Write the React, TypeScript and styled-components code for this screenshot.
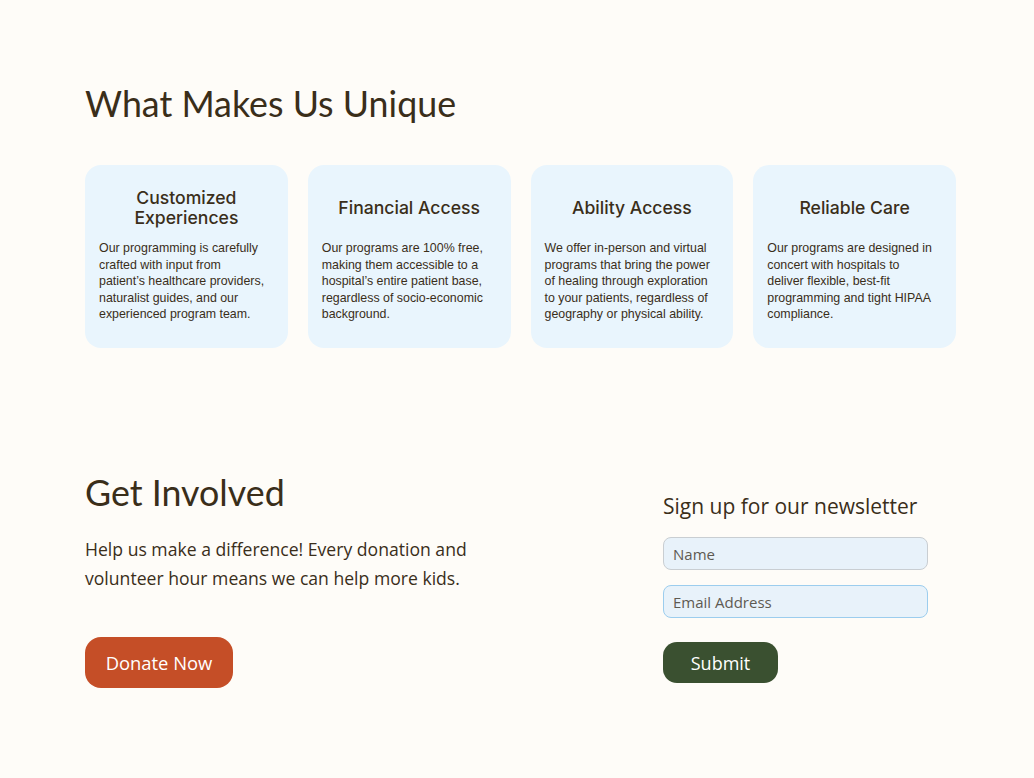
import React from "react";
import styled, { createGlobalStyle } from "styled-components";

const GlobalStyle = createGlobalStyle`
  html, body {
    margin: 0;
    padding: 0;
    background: #fefcf8;
  }
  body {
    font-family: "Liberation Sans", Arial, sans-serif;
    color: #3a2e1a;
  }
  * { box-sizing: border-box; }
`;

const Page = styled.main`
  width: 1034px;
  min-height: 778px;
  padding: 82px 78px 0 85px;
`;

const Heading = styled.h2`
  margin: 0;
  font-family: Lato, "Open Sans", sans-serif;
  font-weight: 400;
  font-size: 35.8px;
  line-height: 44px;
  color: #3a2e1a;
`;

const Cards = styled.div`
  display: grid;
  grid-template-columns: repeat(4, 1fr);
  gap: 20px;
  margin-top: 39px;
`;

const Card = styled.article`
  background: #e9f5fd;
  border-radius: 16px;
  height: 183px;
  padding: 23px 14px 0 14px;
  display: flex;
  flex-direction: column;
`;

const CardTitle = styled.h3`
  margin: 0;
  min-height: 40px;
  padding-bottom: 5px;
  box-sizing: content-box;
  display: flex;
  align-items: center;
  justify-content: center;
  text-align: center;
  font-family: Inter, "Liberation Sans", Arial, sans-serif;
  font-weight: 500;
  font-size: 17.6px;
  line-height: 20px;
  color: #3a2e1a;
`;

const CardText = styled.p`
  margin: 7px 0 0 0;
  padding-right: 6px;
  font-size: 12.4px;
  line-height: 16.5px;
  color: #3a2e1a;
`;

const Involved = styled.section`
  display: grid;
  grid-template-columns: 578px 265px;
  margin-top: 123px;
`;

const LeftCol = styled.div`
  display: flex;
  flex-direction: column;
  align-items: flex-start;
`;

const Lead = styled.p`
  margin: 20px 0 0 0;
  font-family: "Open Sans", Lato, sans-serif;
  font-size: 17.6px;
  line-height: 29px;
  color: #3a2e1a;
  max-width: 400px;
`;

const Button = styled.button<{ $tone: "orange" | "green" }>`
  border: none;
  color: #ffffff;
  cursor: pointer;
  padding: 0;
  font-family: "Open Sans", Lato, sans-serif;
  font-weight: 400;
  font-size: 18.4px;
  background: ${(p) => (p.$tone === "orange" ? "#c54e27" : "#3a5030")};
  width: ${(p) => (p.$tone === "orange" ? "148px" : "115px")};
  height: ${(p) => (p.$tone === "orange" ? "51px" : "41px")};
  border-radius: ${(p) => (p.$tone === "orange" ? "16px" : "14px")};
`;

const DonateButton = styled(Button)`
  margin-top: 44px;
`;

const Form = styled.form`
  display: flex;
  flex-direction: column;
  align-items: flex-start;
  padding-top: 23px;
`;

const FormTitle = styled.h3`
  margin: 0 0 19px 0;
  font-family: "Open Sans", Arial, sans-serif;
  font-weight: 400;
  font-size: 21px;
  line-height: 24px;
  color: #3a2e1a;
`;

const Input = styled.input<{ $focused?: boolean }>`
  width: 265px;
  height: 33px;
  border-radius: 8px;
  border: 1.5px solid ${(p) => (p.$focused ? "#9ccdee" : "#c9ced2")};
  background: #e8f2fa;
  padding: 0 9px;
  font-family: "Open Sans", Arial, sans-serif;
  font-size: 15px;
  color: #3a2e1a;
  outline: none;
  margin-bottom: 15px;
  &::placeholder { color: #5e5a52; }
`;

const SubmitButton = styled(Button)`
  margin-top: 9px;
  font-size: 18px;
`;

const cards = [
  {
    title: "Customized Experiences",
    text: "Our programming is carefully crafted with input from patient’s healthcare providers, naturalist guides, and our experienced program team.",
  },
  {
    title: "Financial Access",
    text: "Our programs are 100% free, making them accessible to a hospital’s entire patient base, regardless of socio-economic background.",
  },
  {
    title: "Ability Access",
    text: "We offer in-person and virtual programs that bring the power of healing through exploration to your patients, regardless of geography or physical ability.",
  },
  {
    title: "Reliable Care",
    text: "Our programs are designed in concert with hospitals to deliver flexible, best-fit programming and tight HIPAA compliance.",
  },
];

export default function App() {
  return (
    <>
      <GlobalStyle />
      <Page>
        <section>
          <Heading>What Makes Us Unique</Heading>
          <Cards>
            {cards.map((c) => (
              <Card key={c.title}>
                <CardTitle>{c.title}</CardTitle>
                <CardText>{c.text}</CardText>
              </Card>
            ))}
          </Cards>
        </section>
        <Involved>
          <LeftCol>
            <Heading>Get Involved</Heading>
            <Lead>
              Help us make a difference! Every donation and volunteer hour means we can help more kids.
            </Lead>
            <DonateButton $tone="orange" type="button">Donate Now</DonateButton>
          </LeftCol>
          <Form onSubmit={(e) => e.preventDefault()}>
            <FormTitle>Sign up for our newsletter</FormTitle>
            <Input placeholder="Name" />
            <Input placeholder="Email Address" $focused />
            <SubmitButton $tone="green" type="submit">Submit</SubmitButton>
          </Form>
        </Involved>
      </Page>
    </>
  );
}
